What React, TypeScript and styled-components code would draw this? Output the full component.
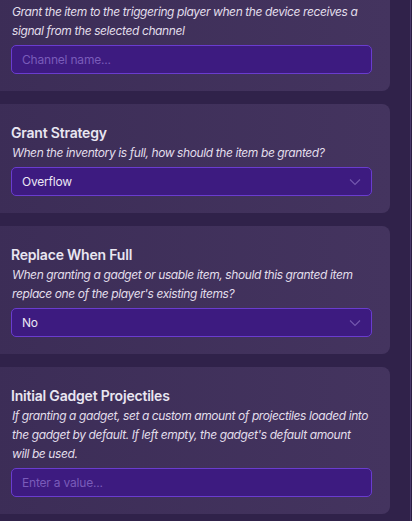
import React from 'react'
import styled, { createGlobalStyle } from 'styled-components'

const GlobalStyle = createGlobalStyle`
  html, body {
    margin: 0;
    padding: 0;
    background: #30224a;
    overflow: hidden;
  }
  * { box-sizing: border-box; }
`

interface Option {
  title?: string
  description: string
  kind: 'input' | 'select'
  value: string
}

// first card is scrolled past its title
const options: Option[] = [
  {
    description: 'Grant the item to the triggering player when the device receives a signal from the selected channel',
    kind: 'input',
    value: 'Channel name...',
  },
  {
    title: 'Grant Strategy',
    description: 'When the inventory is full, how should the item be granted?',
    kind: 'select',
    value: 'Overflow',
  },
  {
    title: 'Replace When Full',
    description: "When granting a gadget or usable item, should this granted item replace one of the player's existing items?",
    kind: 'select',
    value: 'No',
  },
  {
    title: 'Initial Gadget Projectiles',
    description: "If granting a gadget, set a custom amount of projectiles loaded into the gadget by default. If left empty, the gadget's default amount will\u00A0be used.",
    kind: 'input',
    value: 'Enter a value...',
  },
]

const App: React.FC = () => {
  return (
    <Page>
      <GlobalStyle />
      <Column>
        {options.map((opt, i) => (
          <Card key={i}>
            {opt.title && <Title>{opt.title}</Title>}
            <Description>{opt.description}</Description>
            {opt.kind === 'input' ? (
              <Field placeholder={opt.value} />
            ) : (
              <Select>
                <span>{opt.value}</span>
                <svg width="12" height="8" viewBox="0 0 12 8" fill="none">
                  <path d="M1 1.5 L6 6.5 L11 1.5" stroke="#7458ae" strokeWidth="1.1" />
                </svg>
              </Select>
            )}
          </Card>
        ))}
      </Column>
      <Track />
    </Page>
  )
}

export default App

const Page = styled.div`
width: 412px;
height: 521px;
display: flex;
overflow: hidden;
background: #30224a;
font-family: Inter, "Noto Sans", sans-serif;
`

const Column = styled.div`
flex: 1;
display: flex;
flex-direction: column;
gap: 13px;
margin-top: -17px;
padding-right: 20px;
`

const Track = styled.div`
width: 2px;
border-left: 1px solid #4b3c6c;
background: #2b1f43;
`

const Card = styled.div`
margin-left: -8px;
padding: 19px 18px 17px 19px;
border-radius: 8px;
background: linear-gradient(90deg, #3c2d57 0%, #44345f 100%);
`

const Title = styled.div`
font-size: 14px;
line-height: 20px;
font-weight: 600;
color: #e9e6f1;
letter-spacing: -0.2px;
`

const Description = styled.div`
padding-left: 1px;
font-size: 12px;
line-height: 19px;
font-style: italic;
color: #e2deeb;
letter-spacing: -0.4px;
`

const Field = styled.input`
display: block;
width: 100%;
height: 29px;
margin-top: 5px;
padding: 0 10px;
border: 1px solid #6a3ccf;
border-radius: 5px;
background: #3d1b80;
font-family: inherit;
font-size: 12px;
letter-spacing: -0.2px;
color: #e9e6f1;
outline: none;
&::placeholder {
  color: #7a5cba;
}
`

const Select = styled.div`
display: flex;
align-items: center;
justify-content: space-between;
height: 29px;
margin-top: 5px;
padding: 0 10px 0 10px;
border: 1px solid #6a3ccf;
border-radius: 5px;
background: #3d1b80;
font-size: 12px;
letter-spacing: -0.2px;
color: #ebe7f4;
`
